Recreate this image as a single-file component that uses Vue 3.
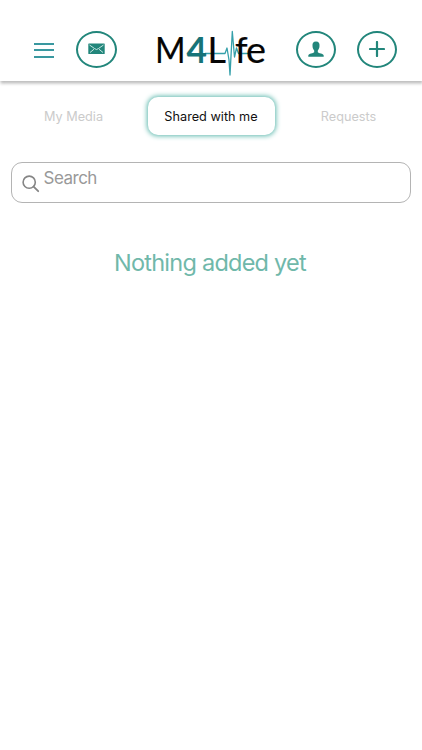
<script setup>
import { ref } from 'vue'

const tabs = ['My Media', 'Shared with me', 'Requests']
const active = ref(1)
const query = ref('')
</script>

<template>
  <div class="screen">
    <header class="bar">
      <button class="menu" aria-label="Menu">
        <span></span><span></span><span></span>
      </button>
      <button class="round mail" aria-label="Messages">
        <svg width="17" height="12" viewBox="0 0 17 12">
          <rect x="0.3" y="0.5" width="16.4" height="10.6" rx="0.6" fill="#22867b" />
          <path d="M1.5 2 L6.5 5.5 Q8.5 7.6 10.5 5.5 L15.5 2 M2 9.5 L6 6.2 M15 9.5 L11 6.2" fill="none" stroke="#d8f0ec" stroke-width="0.9" />
        </svg>
      </button>
      <svg class="logo" width="120" height="56" viewBox="150 24 120 56" role="img" aria-label="M4Life">
        <path d="M205 53.5 H225 L227 48 L229 60 L230 75 L232.3 31.5 L234.5 57 L236.5 48 L238.5 53.5 H249" fill="none" stroke="#35a0aa" stroke-width="1.3" stroke-linejoin="round" />
        <g class="letters">
          <text x="155" y="62.7" textLength="30.6" lengthAdjust="spacingAndGlyphs" class="em">M</text>
          <text class="four" x="186.4" y="62.7" textLength="20.5" lengthAdjust="spacingAndGlyphs">4</text>
          <text x="207.6" y="62.7" textLength="18.5" lengthAdjust="spacingAndGlyphs" class="em">L</text>
          <text x="234.9" y="62.7" class="em">f</text>
          <text x="246" y="62.7" textLength="20" lengthAdjust="spacingAndGlyphs" class="em">e</text>
        </g>
      </svg>
      <button class="round user" aria-label="Profile">
        <svg width="16" height="17" viewBox="0 0 16 17">
          <path d="M8 0.6 C5.2 0.6 4.3 2.4 4.5 5 C4.6 7 5.2 8.3 6.2 9.4 V11.2 C5.4 12.3 0.7 12.2 0.3 14.6 V15.8 H15.7 V14.6 C15.3 12.2 10.6 12.3 9.8 11.2 V9.4 C10.8 8.3 11.4 7 11.5 5 C11.7 2.4 10.8 0.6 8 0.6 Z" fill="#22867b" />
        </svg>
      </button>
      <button class="round add" aria-label="Add">
        <svg width="16" height="16" viewBox="0 0 16 16">
          <path d="M8 1 V15 M1 8 H15" stroke="#22867b" stroke-width="2.2" stroke-linecap="round" />
        </svg>
      </button>
    </header>

    <nav class="tabs">
      <button v-for="(tab, i) in tabs" :key="tab" class="tab" :class="{ active: i === active }" @click="active = i">
        <span>{{ tab }}</span>
      </button>
    </nav>

    <label class="search">
      <svg width="18" height="18" viewBox="0 0 18 18">
        <circle cx="7.2" cy="7.2" r="6.1" fill="none" stroke="#858585" stroke-width="1.6" />
        <path d="M11.6 11.6 L16.2 16.2" stroke="#858585" stroke-width="1.8" stroke-linecap="round" />
      </svg>
      <input v-model="query" type="text" placeholder="Search" />
    </label>

    <p class="empty">Nothing added yet</p>
  </div>
</template>

<style>
body {
  margin: 0;
  background: #fff;
}
</style>

<style scoped>
.screen {
  height: 750px;
  background: #fff;
  font-family: Inter, 'Liberation Sans', sans-serif;
  overflow: hidden;
}

button {
  padding: 0;
  border: 0;
  background: none;
  font: inherit;
}

.bar {
  display: flex;
  align-items: flex-start;
  box-sizing: border-box;
  height: 81px;
  padding: 24px 0 0 34px;
  box-shadow: 0 2px 3px 0.5px rgba(0, 0, 0, 0.27);
}

.menu {
  display: flex;
  flex-direction: column;
  gap: 4.4px;
  width: 20px;
  margin: 19px 22px 0 0;
}

.menu span {
  height: 2px;
  background: #3a98a0;
}

.round {
  display: flex;
  align-items: center;
  justify-content: center;
  box-sizing: border-box;
  height: 37px;
  margin-top: 6.5px;
  border: 2px solid #22867b;
  border-radius: 50%;
}

.mail {
  width: 41px;
}

.logo {
  margin: 0 26px 0 33px;
}

.user,
.add {
  width: 40px;
}

.user {
  margin-right: 20.5px;
}

.letters {
  font: 36px Lato, sans-serif;
  fill: #050505;
}

.letters .em {
  stroke: #050505;
  stroke-width: 0.2px;
}

.letters .four {
  font-weight: 700;
  fill: #177378;
}

.tabs {
  display: flex;
  justify-content: space-between;
  padding: 16px 10px 0;
}

.tab {
  width: 127px;
  height: 38px;
  border-radius: 10px;
  color: #cbcbcb;
  font-size: 12.7px;
  letter-spacing: 0;
}

.tab.active {
  color: #111;
  box-shadow: 0 0 5px 1px #5fb9ae;
}

.search {
  display: flex;
  align-items: flex-start;
  box-sizing: border-box;
  height: 41px;
  margin: 27px 11px 0;
  padding: 12px 10px 0;
  border: 1px solid #b4b4b4;
  border-radius: 11px;
}

.search input {
  flex: 1;
  min-width: 0;
  height: 22px;
  margin: -8px 0 0 3.5px;
  padding: 0;
  border: 0;
  outline: 0;
  background: none;
  font: 17px Inter, sans-serif;
  letter-spacing: -0.5px;
}

.search input::placeholder {
  color: #999;
  opacity: 1;
}

.empty {
  margin: 45px 0 0;
  padding-right: 2px;
  color: #70b8aa;
  font-size: 23.5px;
  letter-spacing: -0.75px;
  line-height: 30px;
  text-align: center;
}
</style>
